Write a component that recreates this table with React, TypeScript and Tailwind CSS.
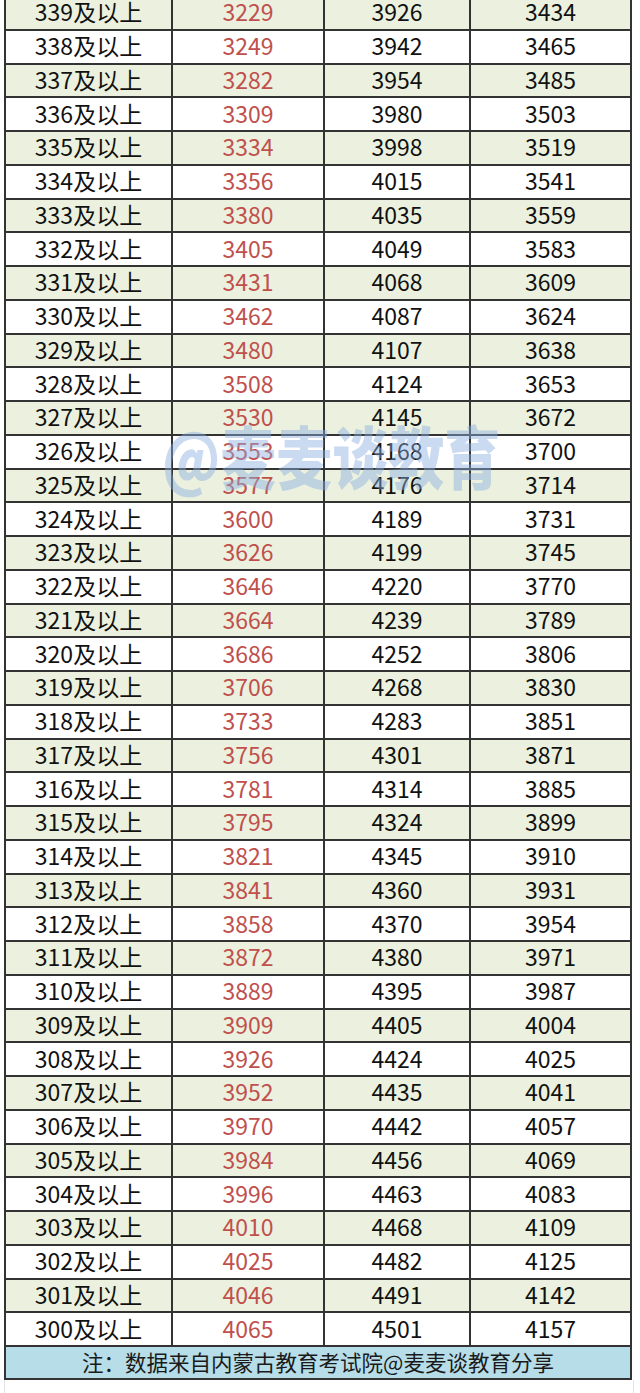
import React from "react";

const rows: [number, number, number, number][] = [
  [339, 3229, 3926, 3434],
  [338, 3249, 3942, 3465],
  [337, 3282, 3954, 3485],
  [336, 3309, 3980, 3503],
  [335, 3334, 3998, 3519],
  [334, 3356, 4015, 3541],
  [333, 3380, 4035, 3559],
  [332, 3405, 4049, 3583],
  [331, 3431, 4068, 3609],
  [330, 3462, 4087, 3624],
  [329, 3480, 4107, 3638],
  [328, 3508, 4124, 3653],
  [327, 3530, 4145, 3672],
  [326, 3553, 4168, 3700],
  [325, 3577, 4176, 3714],
  [324, 3600, 4189, 3731],
  [323, 3626, 4199, 3745],
  [322, 3646, 4220, 3770],
  [321, 3664, 4239, 3789],
  [320, 3686, 4252, 3806],
  [319, 3706, 4268, 3830],
  [318, 3733, 4283, 3851],
  [317, 3756, 4301, 3871],
  [316, 3781, 4314, 3885],
  [315, 3795, 4324, 3899],
  [314, 3821, 4345, 3910],
  [313, 3841, 4360, 3931],
  [312, 3858, 4370, 3954],
  [311, 3872, 4380, 3971],
  [310, 3889, 4395, 3987],
  [309, 3909, 4405, 4004],
  [308, 3926, 4424, 4025],
  [307, 3952, 4435, 4041],
  [306, 3970, 4442, 4057],
  [305, 3984, 4456, 4069],
  [304, 3996, 4463, 4083],
  [303, 4010, 4468, 4109],
  [302, 4025, 4482, 4125],
  [301, 4046, 4491, 4142],
  [300, 4065, 4501, 4157],
];

const font = { fontFamily: '"Noto Sans CJK SC", "Noto Sans", sans-serif' };

export default function App() {
  return (
    <div className="w-[640px] h-[1393px] bg-white overflow-hidden" style={font}>
      <div className="relative ml-[4px] mt-[-3px] w-[628px] border-x-2 border-[#333]">
        {rows.map(([score, a, b, c]) => (
          <div
            key={score}
            className={`flex h-[33.76px] border-b-2 border-[#333] text-[23px] leading-none text-[#111] ${
              score % 2 === 1 ? "bg-[#ebf1de]" : "bg-white"
            }`}
          >
            <div className="w-[167px] flex items-center justify-center border-r-2 border-[#333] pb-[2px]">
              {score}及以上
            </div>
            <div className="w-[152px] flex items-center justify-center border-r-2 border-[#333] pb-[2px] text-[#c0504d]">
              {a}
            </div>
            <div className="w-[146px] flex items-center justify-center border-r-2 border-[#333] pb-[2px]">
              {b}
            </div>
            <div className="flex-1 flex items-center justify-center pb-[2px]">{c}</div>
          </div>
        ))}
        <div className="flex h-[33px] items-center justify-center border-b-2 border-[#333] bg-[#b7dde8] text-[21.5px] leading-none text-[#1a1a1a] pb-[2px]">
          注：数据来自内蒙古教育考试院@麦麦谈教育分享
        </div>

        {/* watermark */}
        <div className="absolute left-[156px] top-[424px] origin-top scale-y-[1.22] text-[56px] leading-none font-black text-[#8aaee0]/45 pointer-events-none whitespace-nowrap">
          @麦麦谈教育
        </div>
      </div>
      <div className="ml-[4px] h-[13px] w-[630px] border-x border-[#e4e4e4]" />
    </div>
  );
}
